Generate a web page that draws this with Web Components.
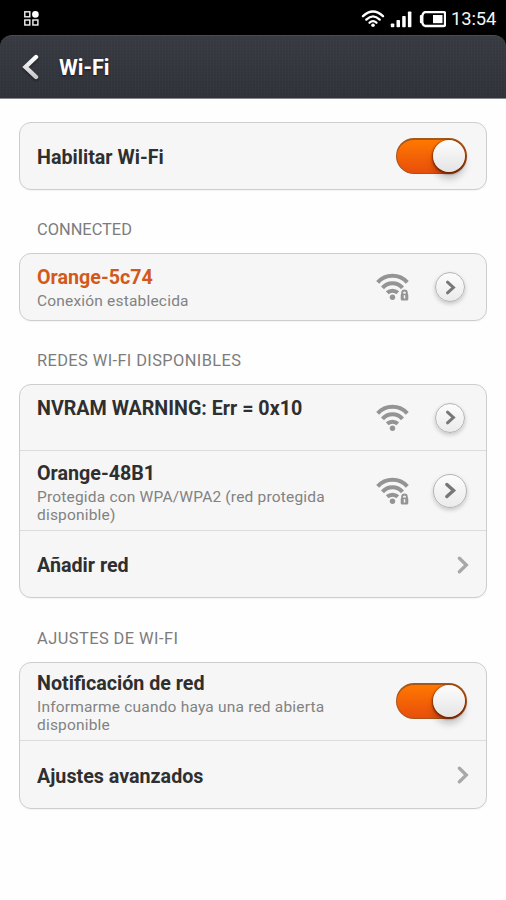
<!DOCTYPE html>
<html lang="es">
<head>
<meta charset="utf-8">
<title>Wi-Fi</title>
<style>
html,body{margin:0;padding:0}
body{width:506px;height:900px;overflow:hidden;background:#fefefe;font-family:Roboto,"Noto Sans",sans-serif}
</style>
</head>
<body>
<wifi-settings></wifi-settings>
<script>
const define = (name, html) => customElements.define(name, class extends HTMLElement {
  constructor() {
    super();
    this.attachShadow({ mode: 'open' }).innerHTML = html;
  }
});

define('status-bar', `<style>
:host{display:flex;height:35px;box-sizing:border-box;background:#000;color:#f4f4f4;padding:0 9px 0 24px;align-items:center}
svg{display:block;flex:none}
.gap{flex:1}
span{font-size:18.400px;line-height:22px;letter-spacing:-.1px;width:46px;margin:3px 0 0 5px;white-space:nowrap}
</style>
<svg width="15" height="15" viewBox="0 0 15 15" style="margin-top:1px" fill="none" stroke="#f4f4f4" stroke-width="1.4"><rect x=".8" y=".8" width="5" height="5"/><rect x=".8" y="9" width="5" height="5"/><rect x="8.9" y="9" width="5" height="5"/><circle cx="11.4" cy="3.4" r="3.3" fill="#fff" stroke="none"/></svg>
<div class="gap"></div>
<svg width="85" height="18" viewBox="0 0 85 18" style="margin-top:2px" fill="none" stroke="#fff" stroke-width="2.3" stroke-linecap="round">
<path d="M2 6.200Q12-3.200 22 6.200M5.300 9.600Q12 3.200 18.700 9.600M8.600 12.700Q12 9.600 15.400 12.700"/>
<circle cx="12" cy="15.300" r="1.800" fill="#fff" stroke="none"/>
<g fill="#fff" stroke="none"><rect x="29.800" y="13.500" width="3.500" height="3.700" rx=".8"/><rect x="35.500" y="10" width="3.500" height="7.200" rx=".8"/><rect x="41.200" y="6" width="3.500" height="11.200" rx=".8"/><rect x="46.900" y="1.500" width="3.500" height="15.700" rx=".8"/><rect x="72" y="5" width="9.500" height="8.200"/><rect x="58.900" y="5" width="3" height="8.200" rx="1"/></g>
<path d="M64 2.200H83Q84 2.200 84 3.200V15Q84 16 83 16H64Q62 15.500 61.300 12.500V5.700Q62 2.700 64 2.200Z"/>
</svg>
<span>13:54</span>`);

define('title-bar', `<style>
:host{display:block;height:64px;background:#000}
div{height:64px;box-sizing:border-box;border-radius:12px 12px 0 0;border-top:1px solid #4b4d54;border-bottom:1px solid #85878c;
background:repeating-linear-gradient(90deg,#ffffff04 0 1px,transparent 1px 3px),repeating-linear-gradient(#00000009 0 1px,transparent 1px 3px),linear-gradient(#393b43,#31333b);
display:flex;align-items:center;padding-left:22px;color:#fff;gap:19px}
svg{display:block;filter:drop-shadow(0 2px 1px #0005)}
b{font-size:21.500px;font-weight:700;line-height:24px;padding-top:1px;text-shadow:0 1px 2px #0008}
</style>
<div><svg width="18" height="26" viewBox="0 0 18 26"><defs><linearGradient id="g" x2="0" y2="1"><stop offset="0" stop-color="#fff"/><stop offset="1" stop-color="#c9c9cc"/></linearGradient></defs><path d="M14 3 3.500 13 14 23" fill="none" stroke="url(#g)" stroke-width="4.400" stroke-linecap="round"/></svg><b><slot></slot></b></div>`);

define('section-title', `<style>
:host{display:block;font-size:16.400px;line-height:20px;color:#7c7c7c;padding-left:37px;letter-spacing:var(--ls,0);white-space:nowrap}
</style><slot></slot>`);

define('setting-card', `<style>
:host{display:block;margin:0 19px;border:1px solid #cdcdcd;border-radius:12px;background:#f6f6f6;box-sizing:border-box;box-shadow:0 1px 1px #0000000a}
</style><slot></slot>`);

define('setting-row', `<style>
:host{display:flex;box-sizing:border-box;padding-left:17px}
:host([line]){border-bottom:1px solid #dcdcdc}
.text{flex:1;display:flex;flex-direction:column;padding-top:var(--pt,0)}
::slotted([slot=title]){font-size:19.700px;line-height:24px;font-weight:700;color:var(--title,#2f2f2f);white-space:nowrap}
::slotted([slot=note]){margin-top:3px;font-size:15.500px;line-height:17.500px;color:#828282;letter-spacing:.19px;white-space:nowrap}
.end{display:flex;align-items:center;flex:none}
</style>
<div class="text"><slot name="title"></slot><slot name="note"></slot></div>
<div class="end"><slot name="end"></slot></div>`);

define('toggle-switch', `<style>
:host{display:block;width:71px;height:36px;margin-right:19px}
.track{height:36px;box-sizing:border-box;border-radius:18px;border:1px solid #a9531b;border-top:2px solid #a4561b;background:linear-gradient(#ff7800,#e84e0c);display:flex;justify-content:flex-end;align-items:center;padding-right:1px}
.knob{width:32px;height:32px;flex:none;border-radius:50%;background:linear-gradient(#fdfdfd,#e4e4e4);box-shadow:0 1px 2px 1px #5c1c00cc,0 7px 7px #0003;margin-top:-1px}
</style><div class="track"><div class="knob"></div></div>`);

define('wifi-signal', `<style>
:host{display:block;width:34px;height:30px}
svg{display:block}.lock{display:none}:host([locked]) .lock{display:block}
</style>
<svg width="34" height="30" viewBox="0 0 34 30" fill="none" stroke="#949494" stroke-width="4">
<path d="M1.700 10.400A19.800 19.800 0 0 1 31.300 10.400M6.500 15.900A13.200 13.200 0 0 1 26.500 15.900M11.200 20.800A7.600 7.600 0 0 1 21.800 20.800"/>
<circle cx="16.500" cy="25.200" r="2.700" fill="#949494" stroke="none"/>
<g class="lock"><path d="M25 22V20.500Q25 17.500 28.500 17.500T32 20.500V29H25Z" fill="#f6f6f6" stroke="#f6f6f6" stroke-width="2.500"/><path d="M26.100 22.500V21Q26.100 18.500 28.500 18.500T30.900 21V22.500" stroke-width="1.800"/><rect x="24.700" y="21.600" width="7.600" height="7" rx="1.500" fill="#949494" stroke="none"/><path d="M28.500 23.200V26.500" stroke="#f6f6f6" stroke-width="1.500"/></g>
</svg>`);

define('detail-button', `<style>
:host{display:flex;align-items:center;justify-content:center;width:var(--size,30px);height:var(--size,30px);box-sizing:border-box;border:1px solid #b4b4b4;border-radius:50%;background:linear-gradient(#fcfcfc,#ebebeb);box-shadow:0 2px 4px #0003}
svg{display:block;width:var(--chev,11px);margin-left:1px}
</style><svg viewBox="0 0 11 15"><path d="M2.500 2.200 8.400 7.500 2.500 12.800" fill="none" stroke="#777" stroke-width="3" stroke-linecap="round"/></svg>`);

define('row-arrow', `<style>:host{display:block;margin:1px 17px 0 0}svg{display:block}</style>
<svg width="12" height="18" viewBox="0 0 12 18"><path d="M2.400 2.200 9.300 9 2.400 15.800" fill="none" stroke="#a8a8a8" stroke-width="3.300" stroke-linecap="round"/></svg>`);

define('wifi-settings', `<style>
:host{display:flex;flex-direction:column}
wifi-signal{margin-right:25px}
detail-button{margin-right:21px}
.big{--size:34px;--chev:12.500px;margin-right:19px}
.big-row wifi-signal{margin-right:23px}
</style>
<status-bar></status-bar>
<title-bar>Wi-Fi</title-bar>
<setting-card style="margin-top:23px">
<setting-row style="height:66px;--pt:23px"><span slot="title">Habilitar Wi-Fi</span><toggle-switch slot="end"></toggle-switch></setting-row>
</setting-card>
<section-title style="margin:30px 0 13px">CONNECTED</section-title>
<setting-card>
<setting-row style="height:66px;--pt:12px;--title:#d2591b"><span slot="title">Orange-5c74</span><span slot="note">Conexión establecida</span><wifi-signal slot="end" locked></wifi-signal><detail-button slot="end"></detail-button></setting-row>
</setting-card>
<section-title style="margin:30px 0 13px;--ls:.4px">REDES WI-FI DISPONIBLES</section-title>
<setting-card>
<setting-row line style="height:66px;--pt:12px"><span slot="title">NVRAM WARNING: Err = 0x10</span><wifi-signal slot="end"></wifi-signal><detail-button slot="end"></detail-button></setting-row>
<setting-row class="big-row" line style="height:80px;--pt:11px"><span slot="title">Orange-48B1</span><span slot="note">Protegida con WPA/WPA2 (red protegida<br>disponible)</span><wifi-signal slot="end" locked></wifi-signal><detail-button class="big" slot="end"></detail-button></setting-row>
<setting-row style="height:66px;--pt:23px"><span slot="title">Añadir red</span><row-arrow slot="end"></row-arrow></setting-row>
</setting-card>
<section-title style="margin:31px 0 13px;--ls:.45px">AJUSTES DE WI-FI</section-title>
<setting-card>
<setting-row line style="height:78px;--pt:9px"><span slot="title">Notificación de red</span><span slot="note">Informarme cuando haya una red abierta<br>disponible</span><toggle-switch slot="end" style="margin-bottom:1px"></toggle-switch></setting-row>
<setting-row style="height:67px;--pt:24px"><span slot="title">Ajustes avanzados</span><row-arrow slot="end"></row-arrow></setting-row>
</setting-card>`);
</script>
</body>
</html>
